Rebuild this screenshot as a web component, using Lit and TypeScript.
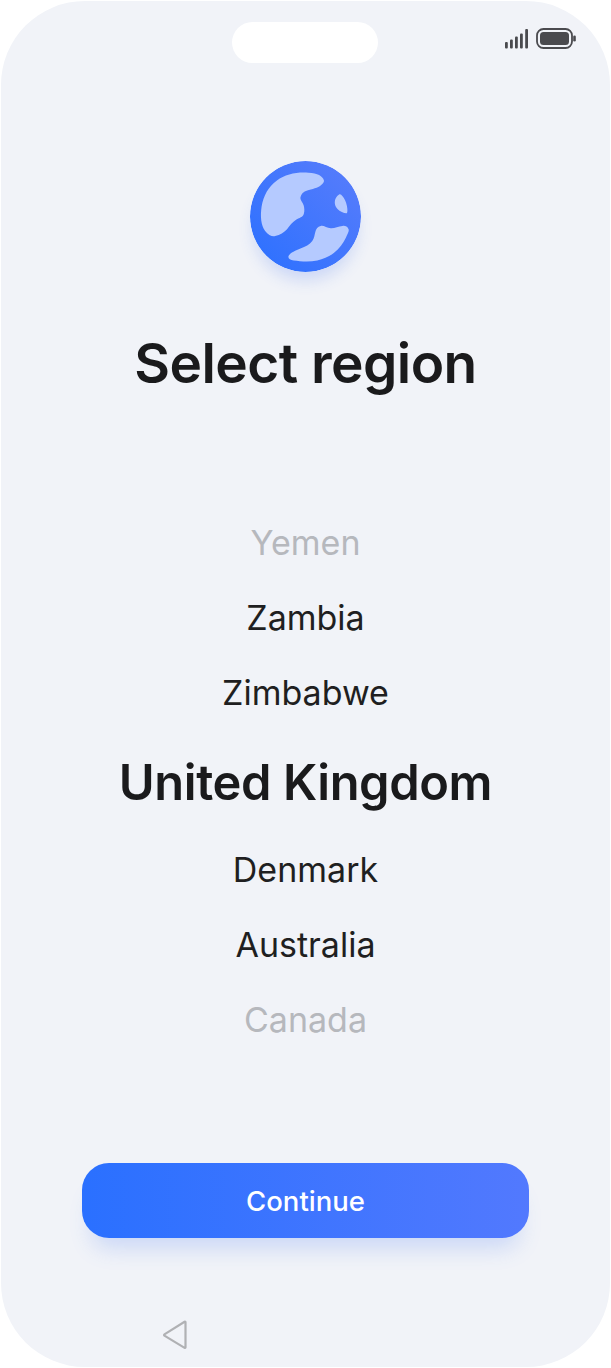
import { html, css, LitElement } from 'lit';
import { customElement } from 'lit/decorators.js';

const REGIONS = [
  { name: 'Yemen', kind: 'faded' },
  { name: 'Zambia', kind: '' },
  { name: 'Zimbabwe', kind: '' },
  { name: 'United Kingdom', kind: 'current' },
  { name: 'Denmark', kind: '' },
  { name: 'Australia', kind: '' },
  { name: 'Canada', kind: 'faded' },
];

@customElement('app-root')
export class AppRoot extends LitElement {
  static styles = css`
    :host {
      display: block;
      width: 611px;
      height: 1368px;
      background: #fff;
      font-family: Inter, 'Noto Sans', sans-serif;
      color: #1a1a1c;
    }
    .screen {
      box-sizing: border-box;
      width: 609px;
      height: 1366px;
      margin: 1px;
      border-radius: 84px;
      background: #f1f3f8;
      display: flex;
      flex-direction: column;
      align-items: center;
    }
    .status {
      box-sizing: border-box;
      width: 100%;
      height: 62px;
      padding-top: 21px;
      display: grid;
      grid-template-columns: 231px 146px 1fr;
      align-items: start;
    }
    .pill {
      grid-column: 2;
      height: 41px;
      border-radius: 21px;
      background: #fff;
    }
    .signal {
      justify-self: end;
      display: block;
      margin: 6px 34px 0 0;
    }
    .globe {
      display: block;
      margin-top: 98px;
      border-radius: 50%;
      box-shadow: 0 12px 16px -4px rgba(54, 104, 240, 0.2);
    }
    h1 {
      margin: 56px 0 0;
      font-size: 55px;
      line-height: 70px;
      font-weight: 600;
      letter-spacing: -0.55px;
    }
    .list {
      margin-top: 107px;
      display: flex;
      flex-direction: column;
      align-items: center;
    }
    .row {
      height: 75px;
      line-height: 75px;
      font-size: 34px;
      font-weight: 400;
      color: #1f1f21;
    }
    .row.faded {
      color: #b6b8bd;
    }
    .row.current {
      height: 102px;
      line-height: 106px;
      font-size: 48.8px;
      font-weight: 600;
      letter-spacing: -0.4px;
      color: #1a1a1c;
    }
    .continue {
      margin-top: 106px;
      width: 447px;
      height: 75px;
      padding: 0;
      border: 0;
      border-radius: 27px;
      background: linear-gradient(90deg, #2a70ff, #5279fe);
      box-shadow: 0 20px 22px -10px rgba(70, 120, 240, 0.22);
      color: #fff;
      font: 500 27.5px Inter, 'Noto Sans', sans-serif;
    }
    .nav {
      box-sizing: border-box;
      width: 100%;
      padding: 82px 0 0 161px;
    }
    .nav svg {
      display: block;
    }
  `;

  render() {
    return html`
      <div class="screen">
        <div class="status">
          <div class="pill"></div>
          <svg class="signal" width="71" height="22" viewBox="0 0 71 22">
            <g fill="#4a4a4e">
              <rect x="0" y="14" width="2.8" height="6.5" rx="1"></rect>
              <rect x="5" y="11.5" width="2.8" height="9" rx="1"></rect>
              <rect x="10" y="8.5" width="2.8" height="12" rx="1"></rect>
              <rect x="15" y="5.5" width="2.8" height="15" rx="1"></rect>
              <rect x="20.2" y="1" width="2.8" height="19.5" rx="1"></rect>
            </g>
            <rect x="32" y="1" width="35" height="19" rx="6.5" fill="none" stroke="#4a4a4e" stroke-width="1.8"></rect>
            <rect x="35" y="4" width="29" height="13" rx="3.5" fill="#4a4a4e"></rect>
            <rect x="68.2" y="7.5" width="2.6" height="6" rx="1.3" fill="#4a4a4e"></rect>
          </svg>
        </div>

        <svg class="globe" width="111" height="111" viewBox="0 0 110 110">
          <defs>
            <linearGradient id="sea" x1="0" y1="1" x2="1" y2="0">
              <stop offset="0" stop-color="#2a70ff"></stop>
              <stop offset="1" stop-color="#5a7dfb"></stop>
            </linearGradient>
          </defs>
          <circle cx="55" cy="55" r="55" fill="url(#sea)"></circle>
          <g fill="#b5caff">
            <path d="M73.3 19.3C72 14.5 67 12.4 58 11.6C47 10.6 35 13 26.7 19.3C18 26 13.5 34 11.5 45C10 55 11 64 15 69.3C18 73.5 22 75 25 74.3C30 73 33.5 71 36.7 67.6C39.5 63.5 42 60.5 45 58.6C49 56.5 52.5 55.5 53.3 52.6C54.3 49.5 53.8 46.5 53.3 44.3C52.3 41 49.5 38.5 50 36C50.7 32.5 53 30.5 56.7 29.3C61 28 68 26.5 70 24.3C72 22.8 73.6 21 73.3 19.3Z"></path>
            <path d="M88.3 33.3C85.5 35 84 38 84 41C84 44 85 46 86.7 47.6C89 50 93 51.8 95.5 51.8C96.8 51.8 96.8 48 96 44.3C95.2 40.5 93.5 37 91.7 35C90.5 33.5 89.5 32.6 88.3 33.3Z"></path>
            <path d="M97.7 67.6C96.5 65 94.5 64 91.7 64.3C87.5 64.8 84 66.8 80 66.6C76 66.3 73 63.5 70 64.3C67 65 65.6 67 65 69.3C63.8 73 63.8 76.5 61.7 79.3C59 83 55 85 50 86.6C45.5 88.5 40 90.5 38.3 94C37.3 96.5 39.5 98 43.3 98.6C50 99.5 59 100.2 66.7 98.6C73 97 79 94.5 83.3 91C88.5 86.5 92.5 81.5 95 76C96.5 72.5 98.5 69.5 97.7 67.6Z"></path>
          </g>
        </svg>

        <h1>Select region</h1>

        <div class="list">
          ${REGIONS.map((r) => html`<div class="row ${r.kind}">${r.name}</div>`)}
        </div>

        <button class="continue">Continue</button>

        <div class="nav">
          <svg width="26" height="30" viewBox="0 0 26 30">
            <path d="M23.5 2.2V27.4a0.6 0.6 0 0 1-0.9 0.5L2.4 15.6a0.7 0.7 0 0 1 0-1.2L22.6 1.7a0.6 0.6 0 0 1 0.9 0.5Z" fill="none" stroke="#b0b1b4" stroke-width="2.2" stroke-linejoin="round"></path>
          </svg>
        </div>
      </div>
    `;
  }
}
